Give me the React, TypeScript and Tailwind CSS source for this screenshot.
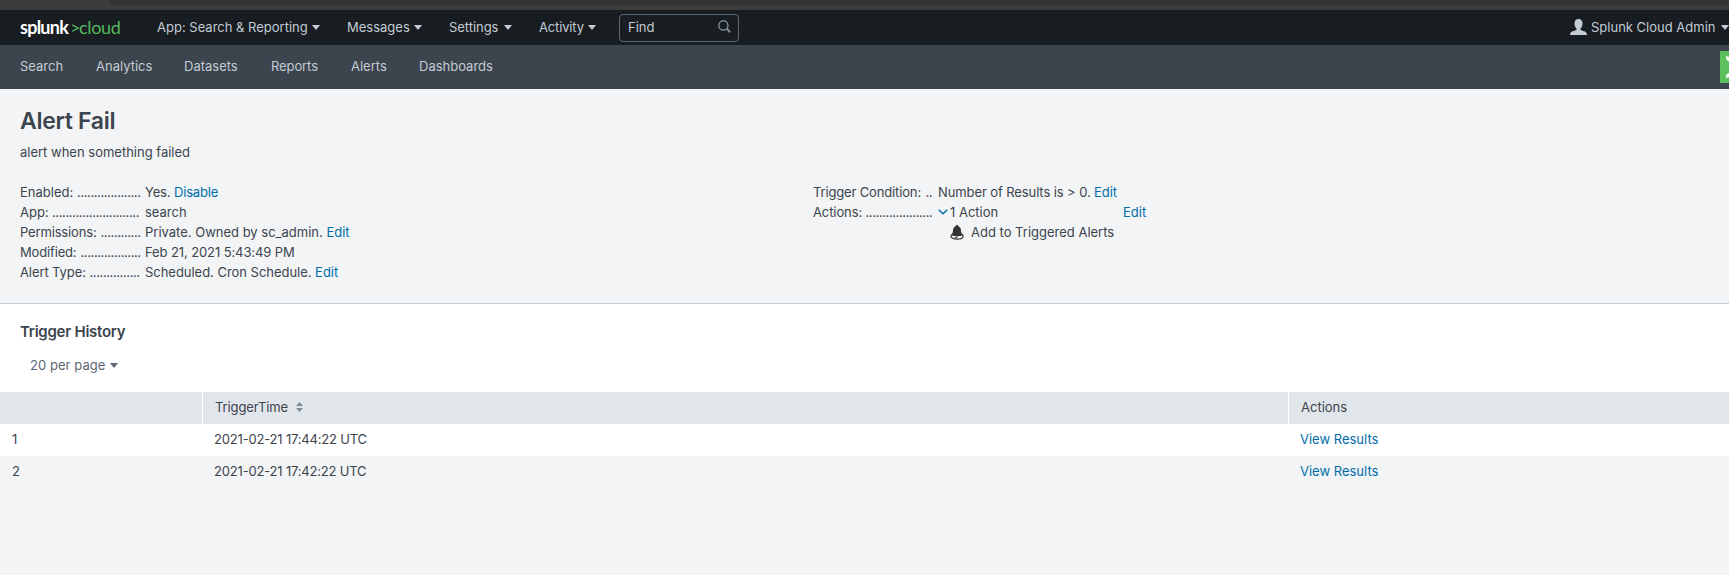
import React from 'react';

function Caret({ className = '' }: { className?: string }) {
  return (
    <svg width="8" height="5" viewBox="0 0 8 5" className={`shrink-0 ${className}`}>
      <path d="M0.6 0h6.8q.6 0 .3.6L4.4 4.6q-.4.4-.8 0L.3.6Q0 0 .6 0z" fill="currentColor" />
    </svg>
  );
}

function MenuItem({ label, box }: { label: string; box: string }) {
  return (
    <div className={`flex shrink-0 items-center whitespace-nowrap ${box}`}>
      <span className="pb-0.5">{label}</span>
      <Caret className="ml-auto" />
    </div>
  );
}

function Link({ children, className = '' }: { children: React.ReactNode; className?: string }) {
  return <a className={`text-[#006eaa] ${className}`}>{children}</a>;
}

function Row({ label, dots, labelClass, children }: { label: string; dots: number; labelClass: string; children: React.ReactNode }) {
  return (
    <div className="flex h-5 items-center whitespace-nowrap">
      <dt className="flex w-[125px] shrink-0">
        <span className={`shrink-0 ${labelClass}`}>{label}</span>
        <span className="tracking-[-0.4px]">{'.'.repeat(dots)}</span>
      </dt>
      <dd className="flex items-center">{children}</dd>
    </div>
  );
}

const results = [
  { id: 1, time: '2021-02-21 17:44:22 UTC', bg: 'bg-white' },
  { id: 2, time: '2021-02-21 17:42:22 UTC', bg: 'bg-[#f2f4f5]' },
];

export default function App() {
  return (
    <div className="flex h-[575px] w-[1729px] flex-col overflow-hidden bg-[#f2f4f5] font-['Inter',sans-serif] text-[13px] leading-5 text-[#3c444d]">
      <div className="h-[10px] shrink-0 bg-[#3c3c3c]">
        <div className="ml-[110px] h-[5px] rounded-bl-lg bg-[#333333]" />
      </div>

      <header className="flex h-[35px] shrink-0 items-center bg-[#171d21] pl-5 text-[#c3cbd4]">
        <div className="flex w-[137px] shrink-0 items-baseline whitespace-nowrap pb-0.5 font-['Lato',sans-serif] text-[18px]">
          <span className="w-[50px] font-bold tracking-[-0.75px] text-white">splunk</span>
          <span className="w-[9px] tracking-tight text-[#53b95c]">&gt;</span>
          <span className="tracking-[-0.35px] text-[#53b95c]">cloud</span>
        </div>
        <MenuItem label="App: Search & Reporting" box="w-[163px]" />
        <MenuItem label="Messages" box="ml-[27px] w-[75px]" />
        <MenuItem label="Settings" box="ml-[27px] w-[63px] tracking-[-0.05px]" />
        <MenuItem label="Activity" box="ml-[27px] w-[57px] tracking-[-0.15px]" />
        <div className="ml-[23px] flex h-7 w-[120px] shrink-0 items-center justify-between rounded border border-[#5c6773] pl-2 pr-[7px]">
          <span className="pb-0.5">Find</span>
          <svg width="13" height="13" viewBox="0 0 13 13" fill="none" stroke="#818d99" className="mb-0.5">
            <circle cx="5.4" cy="5.4" r="4.6" strokeWidth="1.4" />
            <path d="M8.8 8.8l3.4 3.4" strokeWidth="2" />
          </svg>
        </div>
        <div className="ml-auto flex shrink-0 items-center whitespace-nowrap">
          <svg width="17" height="16" viewBox="0 0 17 16" fill="#c3cbd4" className="mr-1 mb-0.5">
            <path d="M8.5 0C5.9 0 4.4 1.9 4.5 4.7c.1 2.1.9 3.8 2 4.8v1.3c-.7.9-4.6 1.3-5.7 2.6C.3 14 0 15 0 16h17c0-1-.3-2-.8-2.6-1.1-1.3-5-1.7-5.7-2.6V9.5c1.1-1 1.9-2.7 2-4.8C12.600 1.900 11.100 0 8.500 0z" />
          </svg>
          <span className="w-[130px] pb-0.5">Splunk Cloud Admin</span>
          <Caret />
        </div>
      </header>

      <nav className="flex h-11 shrink-0 items-center justify-between bg-[#3c444d] pl-5 text-[#c3cbd4]">
        <div className="flex whitespace-nowrap pb-0.5">
          <span className="w-[76px]">Search</span>
          <span className="w-[88px]">Analytics</span>
          <span className="w-[87px]">Datasets</span>
          <span className="w-[80px] tracking-[-0.1px]">Reports</span>
          <span className="w-[68px]">Alerts</span>
          <span>Dashboards</span>
        </div>
        <div className="h-8 w-[9px] bg-[#5cc05c]">
          <svg width="9" height="32" viewBox="0 0 9 32" fill="#fff">
            <path d="M6 4.500c.4 1 1.600 1.200 3 1.300v4.700C7.300 10 6 8.500 6 6.500zM6 27.500v-2c0-1.600 1.300-3 3-3.500v4.200c-1.200.1-2.400.4-3 1.300z" />
          </svg>
        </div>
      </nav>

      <section className="h-[215px] shrink-0 border-b border-[#c3cbd4] pl-5 pt-[18px]">
        <h1 className="text-[23px] font-semibold leading-7 tracking-[-0.3px]">Alert Fail</h1>
        <p className="mt-[7px]">alert when something failed</p>
        <div className="mt-5 flex">
          <dl className="w-[793px] shrink-0">
            <Row label="Enabled:" dots={19} labelClass="w-[57px]"><span className="tracking-[-0.15px]">Yes.&nbsp;<Link>Disable</Link></span></Row>
            <Row label="App:" dots={26} labelClass="w-[32px]">search</Row>
            <Row label="Permissions:" dots={12} labelClass="w-[80.500px] tracking-[-0.16px]">Private. Owned by sc_admin.&nbsp;<Link>Edit</Link></Row>
            <Row label="Modified:" dots={18} labelClass="w-[60.500px] tracking-[-0.16px]"><span className="tracking-[-0.1px]">Feb 21, 2021 5:43:49 PM</span></Row>
            <Row label="Alert Type:" dots={15} labelClass="w-[69.500px] tracking-[-0.1px]"><span className="tracking-[-0.03px]">Scheduled. Cron Schedule.&nbsp;<Link>Edit</Link></span></Row>
          </dl>
          <dl>
            <Row label="Trigger Condition:" dots={2} labelClass="w-[112.500px] tracking-[-0.15px]"><span className="tracking-[-0.1px]">Number of Results is &gt; 0.&nbsp;<Link>Edit</Link></span></Row>
            <Row label="Actions:" dots={20} labelClass="w-[52.500px] tracking-[-0.1px]">
              <svg width="10" height="6" viewBox="0 0 10 6" fill="none" stroke="#006eaa" strokeWidth="1.5" className="mr-0.5">
                <path d="M.7.7L5 4.800 9.300.7" />
              </svg>
              <span className="w-[173px]">1 Action</span>
              <Link>Edit</Link>
            </Row>
            <div className="flex h-5 items-center whitespace-nowrap pl-[137px]">
              <svg width="14" height="15" viewBox="0 0 14 15" className="mr-[7px]">
                <ellipse cx="7" cy="11.200" rx="6.100" ry="2.900" fill="#f2f4f5" stroke="#333" strokeWidth="1.200" />
                <circle cx="7" cy="1.300" r="1.300" fill="#333" />
                <path d="M7 1.200c-2.800 0-4 1.900-4 4.300 0 2.200-.8 3.400-2 4.700q6 1.800 12 0C11.800 8.900 11 7.700 11 5.500c0-2.400-1.200-4.300-4-4.300z" fill="#333" />
                <path d="M4.500 12.800q.4-1.500 4-1.300-.6 1.700-4 1.300z" fill="#333" />
              </svg>
              Add to Triggered Alerts
            </div>
          </dl>
        </div>
      </section>

      <section className="h-[88px] shrink-0 bg-white pl-5 pt-[18px]">
        <h2 className="text-[15px] font-semibold leading-5 tracking-[-0.25px]">Trigger History</h2>
        <div className="mt-[13px] flex items-center pl-2.5 text-[#5c6773]">
          <span className="w-[79.500px] pb-px tracking-[0.06px]">20 per page</span>
          <Caret />
        </div>
      </section>

      <div className="flex h-8 shrink-0 items-center bg-[#e1e6eb]">
        <div className="h-8 w-[203px] shrink-0 border-r border-white" />
        <div className="flex h-8 w-[1086px] shrink-0 items-center border-r border-white pl-3">
          <span className="w-[81px] pb-0.5 tracking-[-0.1px]">TriggerTime</span>
          <svg width="7" height="10" viewBox="0 0 7 10" fill="#818d99" className="mb-0.5">
            <path d="M3.500 0L7 4H0zM3.500 10L0 6h7z" />
          </svg>
        </div>
        <span className="pb-0.5 pl-3">Actions</span>
      </div>
      {results.map((r) => (
        <div key={r.id} className={`flex h-8 shrink-0 items-center pb-0.5 ${r.bg}`}>
          <span className="w-[214px] pl-3">{r.id}</span>
          <span className="w-[1086px] tracking-[-0.18px]">{r.time}</span>
          <Link>View Results</Link>
        </div>
      ))}
    </div>
  );
}
